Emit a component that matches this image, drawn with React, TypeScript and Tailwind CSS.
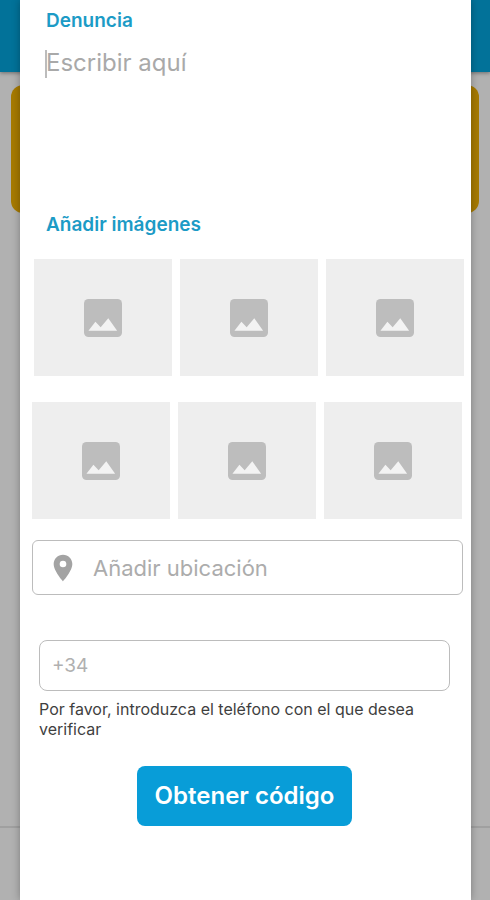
import { MdPlace } from 'react-icons/md';

const imageRows = [
  { id: 'top', className: 'ml-[14px] mr-[7px]', slots: [1, 2, 3] },
  { id: 'bottom', className: 'ml-3 mr-[9px]', slots: [4, 5, 6] },
];

const PhotoIcon = () => (
  <svg viewBox="0 0 18 18" className="size-[38px]" aria-hidden="true">
    <rect width="18" height="18" rx="2.1" fill="#bdbdbd" />
    <path d="M2.1 15 5.4 10.8 7.9 13.4 11.5 9.1 15.7 15z" fill="#f3f3f3" />
  </svg>
);

const ImageSlot = ({ slot }: { slot: number }) => (
  <button
    type="button"
    aria-label={`Añadir imagen ${slot}`}
    className="flex h-[117px] flex-1 items-center justify-center bg-[#eeeeee]"
  >
    <PhotoIcon />
  </button>
);

// Dimmed screen that stays visible behind the dialog
const DimmedPage = () => (
  <div className="absolute inset-0 flex flex-col bg-[#b1b1b1]" aria-hidden="true">
    <div className="h-[72px] bg-[#027299] shadow-[0_1px_4px_rgba(0,0,0,0.4)]" />
    <div className="mx-[11px] mt-[13px] h-32 rounded-xl bg-[#a67a02]" />
    <div className="mt-auto h-[74px] border-t-2 border-[#a0a0a0]" />
  </div>
);

const ReportForm = () => (
  <form className="flex flex-col" onSubmit={(e) => e.preventDefault()}>
    <label htmlFor="report" className="ml-[26px] mt-[9px] text-[19px] leading-6 font-semibold text-[#1c9bc6]">
      Denuncia
    </label>
    <div className="relative mx-[25px] mt-[14px]">
      <span className="absolute left-0 top-[3px] h-7 w-[2px] bg-[#bcbcbc]" />
      <textarea
        id="report"
        placeholder="Escribir aquí"
        className="block h-[134px] w-full resize-none pl-px text-2xl leading-8 outline-none placeholder:text-[#a9a9a9]"
      />
    </div>

    <h2 className="ml-[26px] mt-8 text-[19px] leading-6 font-semibold text-[#1c9bc6]">Añadir imágenes</h2>
    <div className="mt-[22px] flex flex-col gap-[26px]">
      {imageRows.map((row) => (
        <div key={row.id} className={`flex gap-2 ${row.className}`}>
          {row.slots.map((slot) => (
            <ImageSlot key={slot} slot={slot} />
          ))}
        </div>
      ))}
    </div>

    <div className="ml-3 mr-2 mt-[21px] flex h-[55px] items-center rounded-md border border-[#bcbcbc] pl-[14px]">
      <MdPlace className="size-8 shrink-0 text-[#a3a3a3]" />
      <input
        type="text"
        aria-label="Añadir ubicación"
        placeholder="Añadir ubicación"
        className="ml-[14px] min-w-0 flex-1 text-[22px] leading-8 outline-none placeholder:text-[#acacac]"
      />
    </div>

    <div className="ml-[19px] mr-[21px] mt-[45px] flex flex-col">
      <input
        id="phone"
        type="tel"
        placeholder="+34"
        aria-label="Teléfono"
        aria-describedby="phone-help"
        className="h-[51px] rounded-lg border border-[#bcbcbc] px-3 text-[19px] outline-none placeholder:text-[#b0b0b0]"
      />
      <p id="phone-help" className="mt-2 text-base leading-5 text-[#3f3f3f]">
        Por favor, introduzca el teléfono con el que desea verificar
      </p>
      <button
        type="submit"
        className="mt-[27px] h-[60px] self-center rounded-lg bg-[#089dd8] px-[18px] text-2xl font-semibold text-white"
      >
        Obtener código
      </button>
    </div>
  </form>
);

export default function App() {
  return (
    <div className="relative min-h-screen font-['Inter',sans-serif]">
      <DimmedPage />
      <div className="relative flex min-h-screen flex-col">
        <main
          role="dialog"
          aria-label="Denuncia"
          className="ml-5 mr-[19px] flex-1 bg-white pb-10 shadow-[0_0_8px_rgba(0,0,0,0.3)]"
        >
          <ReportForm />
        </main>
      </div>
    </div>
  );
}
